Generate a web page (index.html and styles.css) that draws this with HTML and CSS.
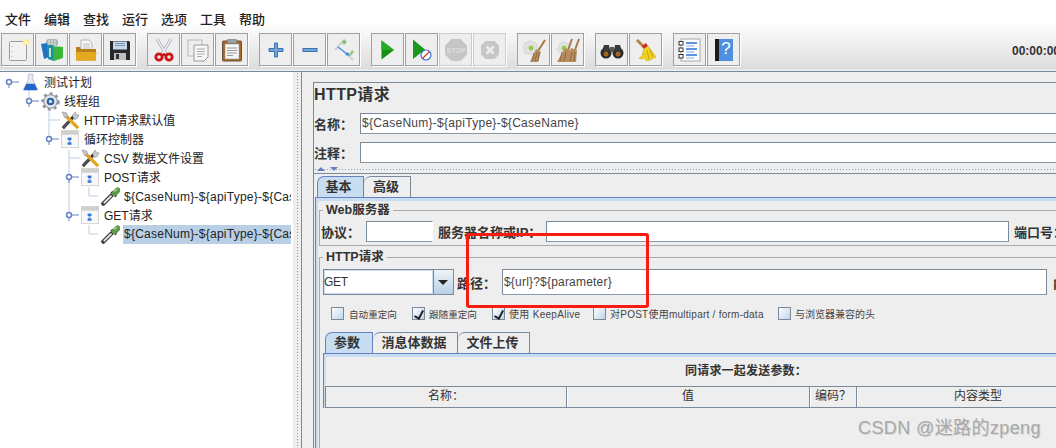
FILE: index.html
```html
<!DOCTYPE html>
<html lang="zh">
<head>
<meta charset="utf-8">
<title>JMeter</title>
<link rel="stylesheet" href="styles.css">
</head>
<body>
<svg class="defs" width="0" height="0">
  <defs>
    <symbol id="i-new" viewBox="0 0 24 24"><rect x="3.500" y="3.500" width="17" height="19" rx="1" fill="#f2f2f0" stroke="#9a9a9a"/><path d="M6 8v1M6 13v1M6 18v1" stroke="#aaa"/><circle cx="20" cy="4" r="3" fill="#ffe98a"/><circle cx="20" cy="4" r="1.300" fill="#fffbe0"/></symbol>
    <symbol id="i-tpl" viewBox="0 0 24 24"><rect x="6" y="1" width="12" height="7" rx="2.500" fill="#a9b8b0"/><path d="M9 2v6M12 2v6M15 2v6" stroke="#e8eeee" stroke-width=".8"/><path d="M1 6l6-1 2 14-5 2z" fill="#1f74c4"/><path d="M12 8l11 1v11l-9 3z" fill="#3cb53c"/><path d="M7 7l6 0 1 16-6-2z" fill="#1d8fa0"/><path d="M10 10v9" stroke="#e8f5e8" stroke-width="1.600"/></symbol>
    <symbol id="i-open" viewBox="0 0 24 24"><path d="M7 2h8l3 3v10H7z" fill="#f8f8f8" stroke="#999" stroke-width=".7"/><path d="M9 6h7M9 8h7M9 10h7" stroke="#aaa" stroke-width=".7"/><path d="M2 9h4l1 2h15v10a1.500 1.500 0 0 1-1.500 1.500h-17a1.500 1.500 0 0 1-1.500-1.500z" fill="#b8801c"/><path d="M1.500 14h21l-1 8.500h-19z" fill="#e5a81f"/></symbol>
    <symbol id="i-save" viewBox="0 0 24 24"><path d="M2 3h19l1 1v18H2z" fill="#26282c"/><rect x="5" y="3.500" width="14" height="8" fill="#c7d8ea"/><path d="M7 5.500h10M7 7.500h10" stroke="#7d96b3"/><rect x="6" y="15" width="12" height="7" fill="#bdbdbd"/><rect x="8" y="16" width="3" height="5" fill="#333"/></symbol>
    <symbol id="i-cut" viewBox="0 0 24 24"><path d="M5 1l9 15M19 1L10 16" stroke="#a0a8b0" stroke-width="3"/><path d="M5 1l9 15M19 1L10 16" stroke="#eef0f2" stroke-width="1.500"/><circle cx="7" cy="19" r="3.200" fill="#e8e8e8" stroke="#d01414" stroke-width="2.800"/><circle cx="17" cy="19" r="3.200" fill="#e8e8e8" stroke="#d01414" stroke-width="2.800"/><path d="M9 17l3-2 3 2-3 1z" fill="#c01010"/></symbol>
    <symbol id="i-copy" viewBox="0 0 24 24"><rect x="2" y="2" width="14" height="16" fill="#efefef" stroke="#b8b8b8"/><path d="M8 7h14v12l-4 4H8z" fill="#f7f7f7" stroke="#999"/><path d="M11 11h8M11 13.500h8M11 16h8M11 18.500h5" stroke="#aaa"/></symbol>
    <symbol id="i-paste" viewBox="0 0 24 24"><rect x="2.500" y="3" width="19" height="20" rx="1" fill="#a86a26" stroke="#6a5238"/><rect x="5" y="6" width="14" height="15" fill="#f5f5f5" stroke="#999" stroke-width=".5"/><rect x="7" y="1.500" width="10" height="4" rx="1" fill="#9a9fa4" stroke="#666" stroke-width=".5"/><path d="M7 10h10M7 12.500h10M7 15h10M7 17.500h6" stroke="#999"/></symbol>
    <symbol id="i-plus" viewBox="0 0 24 24"><path d="M10.500 5h3v5.500H19v3h-5.500V19h-3v-5.500H5v-3h5.500z" fill="#6fa5db" stroke="#3f72ad"/></symbol>
    <symbol id="i-minus" viewBox="0 0 24 24"><rect x="5" y="10.500" width="14" height="3" fill="#6fa5db" stroke="#3f72ad"/></symbol>
    <symbol id="i-toggle" viewBox="0 0 24 24"><path d="M3 12L11 3M21 22l-6-6" stroke="#d0d3d6" stroke-width="2"/><path d="M12 1l3 3-3 3-2-3z" fill="#8fbc78"/><path d="M6 9l9 7" stroke="#3a8ae0" stroke-width="1.300"/><path d="M18 18l-5-1 3-3z" fill="#3a8ae0"/><path d="M20 12l2 2-3 4-2-2z" fill="#9ccb80"/></symbol>
    <symbol id="i-play" viewBox="0 0 24 24"><path d="M5.500 2.500L18 12 5.500 21.500z" fill="#129112"/><path d="M5.500 2.500L18 12H5.500z" fill="#26ad26"/></symbol>
    <symbol id="i-playno" viewBox="0 0 24 24"><path d="M3 1.500l12 10L3 21z" fill="#1a9a1a"/><circle cx="16" cy="17" r="5" fill="#fff" stroke="#3a72d0" stroke-width="1.200"/><path d="M12.500 20.500l7-7" stroke="#d33" stroke-width="1.200"/></symbol>
    <symbol id="i-stop" viewBox="0 0 24 24"><path d="M7.500 1h9L23 7.500v9L16.500 23h-9L1 16.500v-9z" fill="#c6c6c6"/><text x="12" y="15" text-anchor="middle" class="stoptxt">STOP</text></symbol>
    <symbol id="i-shut" viewBox="0 0 24 24"><path d="M7.500 3h9L21 7.500v9L16.500 21h-9L3 16.500v-9z" fill="#c6c6c6"/><path d="M8.500 8.500l7 7M15.500 8.500l-7 7" stroke="#ececec" stroke-width="2.500"/></symbol>
    <symbol id="i-clear" viewBox="0 0 24 24"><path d="M6 4l2-2 2 2h3l2 2v3l2 2-2 2v3H4l-2-2v-2L1 9l2-2V5z" fill="#e2e2e2" stroke="#c4c4c4" stroke-width=".5"/><circle cx="9" cy="10" r="2.500" fill="#95cc4a"/><path d="M23 2l-7 11" stroke="#a87a4a" stroke-width="2"/><path d="M14 11l5 3-3 10H8z" fill="#b98c5c"/><path d="M12 15l-2 8M15 14l-2 9M17 15l-1 8" stroke="#8d6a42"/></symbol>
    <symbol id="i-clearall" viewBox="0 0 24 24"><path d="M5 5l2-2 2 2h3l2 2v3l-2 4H3l-2-3 2-2V7z" fill="#e2e2e2" stroke="#c4c4c4" stroke-width=".5"/><circle cx="8" cy="10" r="2.500" fill="#95cc4a"/><path d="M16 1l-4 11M23 1l-4 11" stroke="#a87a4a" stroke-width="2"/><path d="M9 10l5 2-2 12H1z" fill="#b98c5c"/><path d="M15 10l6 2-1 12H10z" fill="#b98c5c"/><path d="M6 14l-2 9M10 14l-2 9M16 14l-2 9M19 14l-1 9" stroke="#8d6a42"/></symbol>
    <symbol id="i-find" viewBox="0 0 24 24"><circle cx="6" cy="15" r="5.500" fill="#2a2a2a"/><circle cx="18" cy="15" r="5.500" fill="#2a2a2a"/><path d="M4 7h5l1 6H2zM15 7h5l2 6h-8z" fill="#3a3a3a"/><rect x="10" y="9" width="4" height="5" fill="#555"/><circle cx="6" cy="16" r="2.500" fill="#a5651f"/><circle cx="18" cy="16" r="2.500" fill="#a5651f"/></symbol>
    <symbol id="i-broom" viewBox="0 0 24 24"><path d="M3 2l8 8" stroke="#b5854a" stroke-width="3"/><path d="M8 8l4-3 2 3-4 3z" fill="#d22a2a"/><path d="M10 11l4-3 8 11-8 4-3-1 1-2-5 1-2-1 6-4-3 1z" fill="#f2d21e" stroke="#c8a414" stroke-width=".5"/><path d="M13 12l2 9M16 11l3 8" stroke="#c8a414"/></symbol>
    <symbol id="i-list" viewBox="0 0 24 24"><rect x="3" y="1" width="19" height="22" fill="#fbfbfb" stroke="#aaa"/><path d="M8 5h11M8 11h11M8 17h11" stroke="#2a72d6" stroke-width="1.500"/><path d="M8 8h8M8 14h8M8 20h8" stroke="#7db0ec"/><rect x="1" y="3.500" width="4" height="3.500" fill="#fff" stroke="#333"/><rect x="1" y="10" width="4" height="3.500" fill="#fff" stroke="#333"/><rect x="1" y="16.500" width="4" height="3.500" fill="#fff" stroke="#333"/></symbol>
    <symbol id="i-help" viewBox="0 0 24 24"><rect x="3" y="1" width="18" height="22" fill="#4f8fe0"/><rect x="3" y="1" width="4" height="22" fill="#1a1a1a"/><text x="14" y="16" text-anchor="middle" class="helptxt">?</text></symbol>
    <symbol id="t-plan" viewBox="0 0 16 16"><path d="M6 1h4v5l4 8H2l4-8z" fill="#e4e8f0" stroke="#aab3c0" stroke-width=".6"/><path d="M4.500 9h7l2.500 5.500H2z" fill="#2266cc"/></symbol>
    <symbol id="t-gear" viewBox="0 0 20 20"><circle cx="10" cy="10" r="8" fill="#c6ccd2" stroke="#8a949e" stroke-width="3.500" stroke-dasharray="2.800 3.300"/><circle cx="10" cy="10" r="7" fill="#e4e7ea" stroke="#8e98a2"/><circle cx="10" cy="10" r="4" fill="#2c5f9e"/><circle cx="10" cy="10" r="1.800" fill="#cfe0f2"/></symbol>
    <symbol id="t-wrench" viewBox="0 0 20 20"><path d="M2 18L14 5" stroke="#333" stroke-width="3.200"/><path d="M2 18L9 10" stroke="#555" stroke-width="1.800"/><path d="M12 5l3-4 1 3 3 0-2 4-3 1z" fill="#c8ccd0" stroke="#777" stroke-width=".5"/><path d="M5 5l13 13" stroke="#e3a51c" stroke-width="3.400"/><path d="M1 1l5 1 1 4-3 1z" fill="#c4c8cc" stroke="#777" stroke-width=".5"/></symbol>
    <symbol id="t-loop" viewBox="0 0 20 20"><rect x=".5" y=".5" width="18" height="18" fill="#f8f8f8" stroke="#d4d4d4"/><rect x="1" y="1" width="17" height="4" fill="#cfcfcf"/><rect x="7" y="8" width="4" height="2.500" fill="#2a72d6"/><rect x="7" y="13" width="4" height="2.500" fill="#2a72d6"/><rect x="8" y="10.500" width="2" height="2.500" fill="#7db0ec"/></symbol>
    <symbol id="t-sampler" viewBox="0 0 20 20"><path d="M1 19l11-11" stroke="#444" stroke-width="4.400"/><path d="M3 17l8-8" stroke="#eee" stroke-width="1.800"/><path d="M11 5l5 5" stroke="#222" stroke-width="2.500"/><path d="M14.500 6.500l3-3" stroke="#5a9a4a" stroke-width="6" stroke-linecap="round"/><path d="M14.500 4.500l2-2" stroke="#a8d890" stroke-width="1.400" stroke-linecap="round"/></symbol>
  </defs>
</svg>
<header class="head">
  <nav class="menu">
    <span>文件</span><span>编辑</span><span>查找</span><span>运行</span><span>选项</span><span>工具</span><span>帮助</span>
  </nav>
  <div class="toolbar">
    <div class="group">
      <button class="tool"><svg><use href="#i-new"/></svg></button>
      <button class="tool"><svg><use href="#i-tpl"/></svg></button>
      <button class="tool"><svg><use href="#i-open"/></svg></button>
      <button class="tool"><svg><use href="#i-save"/></svg></button>
    </div>
    <div class="group">
      <button class="tool"><svg><use href="#i-cut"/></svg></button>
      <button class="tool"><svg><use href="#i-copy"/></svg></button>
      <button class="tool"><svg><use href="#i-paste"/></svg></button>
    </div>
    <div class="group">
      <button class="tool"><svg><use href="#i-plus"/></svg></button>
      <button class="tool"><svg><use href="#i-minus"/></svg></button>
      <button class="tool"><svg><use href="#i-toggle"/></svg></button>
    </div>
    <div class="group">
      <button class="tool"><svg><use href="#i-play"/></svg></button>
      <button class="tool"><svg><use href="#i-playno"/></svg></button>
      <button class="tool off"><svg><use href="#i-stop"/></svg></button>
      <button class="tool off"><svg><use href="#i-shut"/></svg></button>
    </div>
    <div class="group">
      <button class="tool"><svg><use href="#i-clear"/></svg></button>
      <button class="tool"><svg><use href="#i-clearall"/></svg></button>
    </div>
    <div class="group">
      <button class="tool"><svg><use href="#i-find"/></svg></button>
      <button class="tool"><svg><use href="#i-broom"/></svg></button>
    </div>
    <div class="group">
      <button class="tool"><svg><use href="#i-list"/></svg></button>
      <button class="tool"><svg><use href="#i-help"/></svg></button>
    </div>
    <div class="timer">00:00:00</div>
  </div>
</header>
<main class="main">
  <section class="tree">
    <svg class="tree-lines" width="292" height="260">
      <g class="lines">
        <path d="M29 88V101M49 110V139M49 120H60M69 150V215M69 158H80M89 187V196H98M89 225V234H98"/>
      </g>
      <g class="handles">
        <path d="M9 82V88M12 82H19M29 101V107M32 101H39M49 139V145M52 139H59M69 177V183M72 177H79M69 215V221M72 215H79"/>
        <circle cx="9" cy="82" r="2.500"/><circle cx="29" cy="101" r="2.500"/><circle cx="49" cy="139" r="2.500"/><circle cx="69" cy="177" r="2.500"/><circle cx="69" cy="215" r="2.500"/>
      </g>
    </svg>
    <div class="node l0"><svg class="ico"><use href="#t-plan"/></svg><span>测试计划</span></div>
    <div class="node l1"><svg class="ico"><use href="#t-gear"/></svg><span>线程组</span></div>
    <div class="node l2"><svg class="ico"><use href="#t-wrench"/></svg><span>HTTP请求默认值</span></div>
    <div class="node l2"><svg class="ico"><use href="#t-loop"/></svg><span>循环控制器</span></div>
    <div class="node l3"><svg class="ico"><use href="#t-wrench"/></svg><span>CSV 数据文件设置</span></div>
    <div class="node l3"><svg class="ico"><use href="#t-loop"/></svg><span>POST请求</span></div>
    <div class="node l4 clip"><svg class="ico"><use href="#t-sampler"/></svg><span class="latin">${CaseNum}-${apiType}-${CaseName}</span></div>
    <div class="node l3"><svg class="ico"><use href="#t-loop"/></svg><span>GET请求</span></div>
    <div class="node l4 clip"><svg class="ico"><use href="#t-sampler"/></svg><span class="latin sel">${CaseNum}-${apiType}-${CaseName}</span></div>
  </section>
  <div class="vsplit"></div>
  <section class="pane">
    <div class="panel">
      <h1 class="title">HTTP请求</h1>
      <div class="row name-row"><label class="lbl">名称：</label><div class="field">${CaseNum}-${apiType}-${CaseName}</div></div>
      <div class="row comment-row"><label class="lbl">注释：</label><div class="field"></div></div>
      <div class="hsplit"><i class="up"></i><i class="down"></i></div>
      <div class="tabbox">
        <div class="tabs">
          <span class="tab on t-basic">基本</span><span class="tab t-adv">高级</span>
        </div>
        <div class="tabpanel">
          <fieldset class="fs web">
            <legend>Web服务器</legend>
            <div class="row srv">
              <label class="lbl">协议：</label><div class="field f-proto"></div>
              <label class="lbl l-host">服务器名称或IP：</label><div class="field f-host"></div>
              <label class="lbl l-port">端口号：</label>
            </div>
          </fieldset>
          <fieldset class="fs http">
            <legend>HTTP请求</legend>
            <div class="row req">
              <div class="combo"><span class="combo-val">GET</span><span class="combo-btn"></span></div>
              <label class="lbl l-path">路径：</label><div class="field f-path">${url}?${parameter}</div>
              <label class="lbl l-enc">内容编码：</label>
            </div>
            <div class="checks">
              <label class="chk c1"><i class="box"></i>自动重定向</label>
              <label class="chk c2"><i class="box ticked"></i>跟随重定向</label>
              <label class="chk c3"><i class="box ticked"></i>使用 KeepAlive</label>
              <label class="chk c4"><i class="box"></i>对POST使用multipart / form-data</label>
              <label class="chk c5"><i class="box"></i>与浏览器兼容的头</label>
            </div>
            <div class="subtabs">
              <span class="tab on st1">参数</span><span class="tab st2">消息体数据</span><span class="tab st3">文件上传</span>
            </div>
            <div class="subpanel">
              <div class="caption">同请求一起发送参数：</div>
              <div class="thead"><span>名称：</span><span>值</span><span>编码？</span><span>内容类型</span></div>
            </div>
          </fieldset>
        </div>
      </div>
    </div>
  </section>
</main>
<div class="redbox"></div>
<div class="mark">CSDN @迷路的zpeng</div>
</body>
</html>
```
FILE: styles.css
```css
* { box-sizing: border-box; }
html, body { margin: 0; padding: 0; }
body {
  width: 1056px; height: 448px; overflow: hidden; position: relative;
  background: #eee; color: #333;
  font: 12px "Liberation Sans", "Noto Sans CJK SC", sans-serif;
  display: flex; flex-direction: column;
}
.defs { position: absolute; }
.stoptxt { font: bold 7px "Liberation Sans", sans-serif; fill: #dedede; }
.helptxt { font: 17px "Liberation Sans", sans-serif; fill: #fff; }

.head { height: 71px; flex: none; background: linear-gradient(#fff 0, #fff 22px, #f2f2f2 40px, #dcdcdc 69px, #eee 70px); }
.menu { height: 33px; padding: 11px 0 0 5px; display: flex; gap: 13px; font-size: 13px; line-height: 17px; color: #222; font-weight: 500; }
.toolbar { display: flex; padding-left: 1px; gap: 11px; align-items: flex-start; }
.group { display: flex; gap: 1px; }
.tool { width: 33px; height: 33px; padding: 0; background: #eee; border: 1px solid #a0a0a0; box-shadow: 1px 1px 0 #fff; display: flex; align-items: center; justify-content: center; }
.tool svg { width: 24px; height: 24px; }
.tool.off { border-color: #ccc; }
.timer { position: absolute; left: 1012px; top: 44px; font-size: 12px; font-weight: bold; color: #333; white-space: nowrap; }

.main { flex: 1; display: flex; min-height: 0; border-top: 1px solid #7a8a99; }
.tree { width: 293px; flex: none; background: #fff; padding-top: 1px; position: relative; overflow: hidden; border-right: 1px solid #fff; }
.tree-lines { position: absolute; left: 0; top: -72px; overflow: visible; }
.lines path { fill: none; stroke: #b8cfe5; }
.handles path { fill: none; stroke: #6382bf; }
.handles circle { fill: #fff; stroke: #6382bf; stroke-width: 1.500; }
.node { height: 19px; display: flex; align-items: center; position: relative; white-space: nowrap; line-height: 18px; font-size: 12px; color: #222; }
.node span { padding: 0 1px; }
.node .latin { letter-spacing: .25px; }
.ico { width: 19px; height: 19px; flex: none; margin-right: 3px; }
.l0 { padding-left: 21px; }
.l1 { padding-left: 41px; }
.l2 { padding-left: 61px; }
.l3 { padding-left: 81px; }
.l4 { padding-left: 101px; }
.sel { background: #b8cfe5; height: 19px; flex: 1; }
.clip { width: 291px; overflow: hidden; }

.vsplit { width: 9px; flex: none; background: #eee radial-gradient(#7f97b5 .6px, transparent .9px) 0 0 / 3px 3px; background-clip: content-box; padding: 0 3px 0 3px; border-right: 1px solid #7a8a99; }
.pane { flex: 1; min-width: 0; overflow: hidden; padding: 10px 0 0 11px; }
.panel { width: 800px; height: 400px; border: 1px solid #7a8a99; border-right: 0; border-bottom: 0; }
.title { margin: 0; height: 23px; font-size: 16px; line-height: 24px; font-weight: bold; color: #333; letter-spacing: .4px; }
.row { display: flex; align-items: center; }
.lbl { font-size: 13px; font-weight: bold; white-space: nowrap; color: #333; flex: none; }
.field { flex: none; height: 21px; background: #fff; border: 1px solid #7a8a99; border-right-color: #fff; border-bottom-color: #8a98a6; padding-left: 1px; line-height: 19px; letter-spacing: .28px; color: #444; }
.name-row { margin-top: 7px; }
.comment-row { margin-top: 8px; }
.name-row .field, .comment-row .field { width: 700px; margin-left: 9px; }
.name-row .lbl, .comment-row .lbl { width: 37px; }
.hsplit { height: 10px; background: radial-gradient(#8ba0b8 .6px, transparent .9px) 0 5px / 3px 3px repeat-x; position: relative; }
.up, .down { position: absolute; top: 4px; width: 0; height: 0; border-left: 4px solid transparent; border-right: 4px solid transparent; }
.up { left: 3px; border-bottom: 4px solid #6382bf; }
.down { left: 16px; border-top: 4px solid #6382bf; }
.tabbox { border-top: 1px solid #7a8a99; padding: 2px 0 0 1px; }
.tabs { display: flex; height: 21px; padding-left: 2px; align-items: flex-end; }
.tab { display: block; flex: none; height: 21px; border: 1px solid #7a8a99; border-bottom: 0; border-top-left-radius: 7px; text-align: center; font-size: 13px; font-weight: bold; line-height: 19px; color: #333; border-left-width: 0; padding-right: 2px; }
.tab.on { background: #c8ddf2; border: 1px solid #6382bf; border-bottom: 0; padding-right: 4px; }
.t-basic { width: 47px; }
.t-adv { width: 47px; }
.tabpanel { border-top: 1px solid #6382bf; border-left: 1px solid #6382bf; box-shadow: inset 0 3px 0 #c8ddf2, inset 2px 0 0 #c8ddf2; padding: 5px 0 0 3px; height: 300px; }
.fs { margin: 0; padding: 0 0 0 2px; border: 1px solid #a9a9a9; border-right: 0; min-width: 0; width: 760px; }
.fs legend { margin-left: 1px; padding: 0 3px; font-size: 12.500px; font-weight: bold; line-height: 14px; color: #333; }
.web { padding-left: 1px; }
.web legend { margin-left: 2px; }
.srv { padding: 4px 0 3px; }
.f-proto { width: 67px; margin-left: 6px; }
.l-host { margin-left: 5px; width: 108px; }
.f-host { width: 463px; border-right-color: #7a8a99; }
.l-port { margin-left: 5px; }
.http { margin-top: 4px; height: 220px; border-bottom: 0; padding-left: 3px; }
.http legend { margin-left: 0; }
.req { margin-top: 5px; height: 26px; }
.combo { flex: none; width: 131px; height: 26px; display: flex; border: 1px solid #7a8a99; background: #fff; }
.combo-val { flex: 1; line-height: 24px; font-size: 12px; letter-spacing: -.3px; box-shadow: inset 0 0 0 1px #c8ddf2; }
.combo-btn { width: 20px; background: linear-gradient(#f0f4f8, #b8cfe5); border-left: 1px solid #7a8a99; position: relative; }
.combo-btn::after { content: ""; position: absolute; left: 4px; top: 10px; border-left: 5px solid transparent; border-right: 5px solid transparent; border-top: 5px solid #222; }
.l-path { margin-left: 3px; width: 45px; }
.req .field { height: 26px; line-height: 24px; letter-spacing: .2px; }
.f-path { width: 545px; border-right-color: #7a8a99; }
.l-enc { margin-left: 6px; }
.checks { display: flex; margin-top: 12px; padding-left: 8px; height: 13px; }
.chk { display: flex; flex: none; align-items: center; font-size: 9.6px; color: #444; white-space: nowrap; }
.box { width: 13px; height: 13px; margin-right: 4px; border: 1px solid #7a8a99; background: linear-gradient(135deg, #fdfdff, #c0d4ea); position: relative; display: block; flex: none; }
.c1 .box { margin-right: 5px; }
.ticked::after { content: ""; position: absolute; left: 3px; top: 1px; width: 4px; height: 8px; border-right: 2px solid #222; border-bottom: 2px solid #222; transform: rotate(28deg); }
.c1 { width: 81px; }
.c2 { width: 80px; }
.c3 { width: 101px; font-size: 10px; letter-spacing: .3px; }
.c4 { width: 185px; font-size: 10px; letter-spacing: .25px; }
.c5 { font-size: 10px; }
.subtabs { display: flex; height: 21px; margin-top: 12px; padding-left: 2px; }
.st1 { width: 48px; }
.st2 { width: 85px; }
.st3 { width: 72px; }
.subpanel { border-top: 1px solid #6382bf; border-left: 1px solid #6382bf; box-shadow: inset 0 3px 0 #c8ddf2, inset 2px 0 0 #c8ddf2; padding-left: 1px; width: 900px; }
.caption { height: 32px; padding-top: 8px; width: 842px; text-align: center; font-weight: bold; line-height: 18px; letter-spacing: .2px; }
.thead { display: grid; grid-template-columns: 242px 243px 47px 242px; height: 22px; border-top: 1px solid #7a8a99; border-bottom: 1px solid #7a8a99; line-height: 19px; text-align: center; color: #333; }
.thead span { border-right: 1px solid #7a8a99; box-shadow: 1px 0 0 #fff; }
.thead span:first-child { border-left: 1px solid #7a8a99; }
.thead span:last-child { border-right: 0; box-shadow: none; }

.redbox { position: absolute; left: 466px; top: 233px; width: 183px; height: 75px; border: 3px solid #f81c10; border-radius: 3px; }
.mark { position: absolute; left: 858px; top: 417px; font-size: 18px; line-height: 22px; color: #a8a8a8; white-space: nowrap; text-shadow: 1px 1px 0 #d8d8d8; letter-spacing: .4px; }
```
